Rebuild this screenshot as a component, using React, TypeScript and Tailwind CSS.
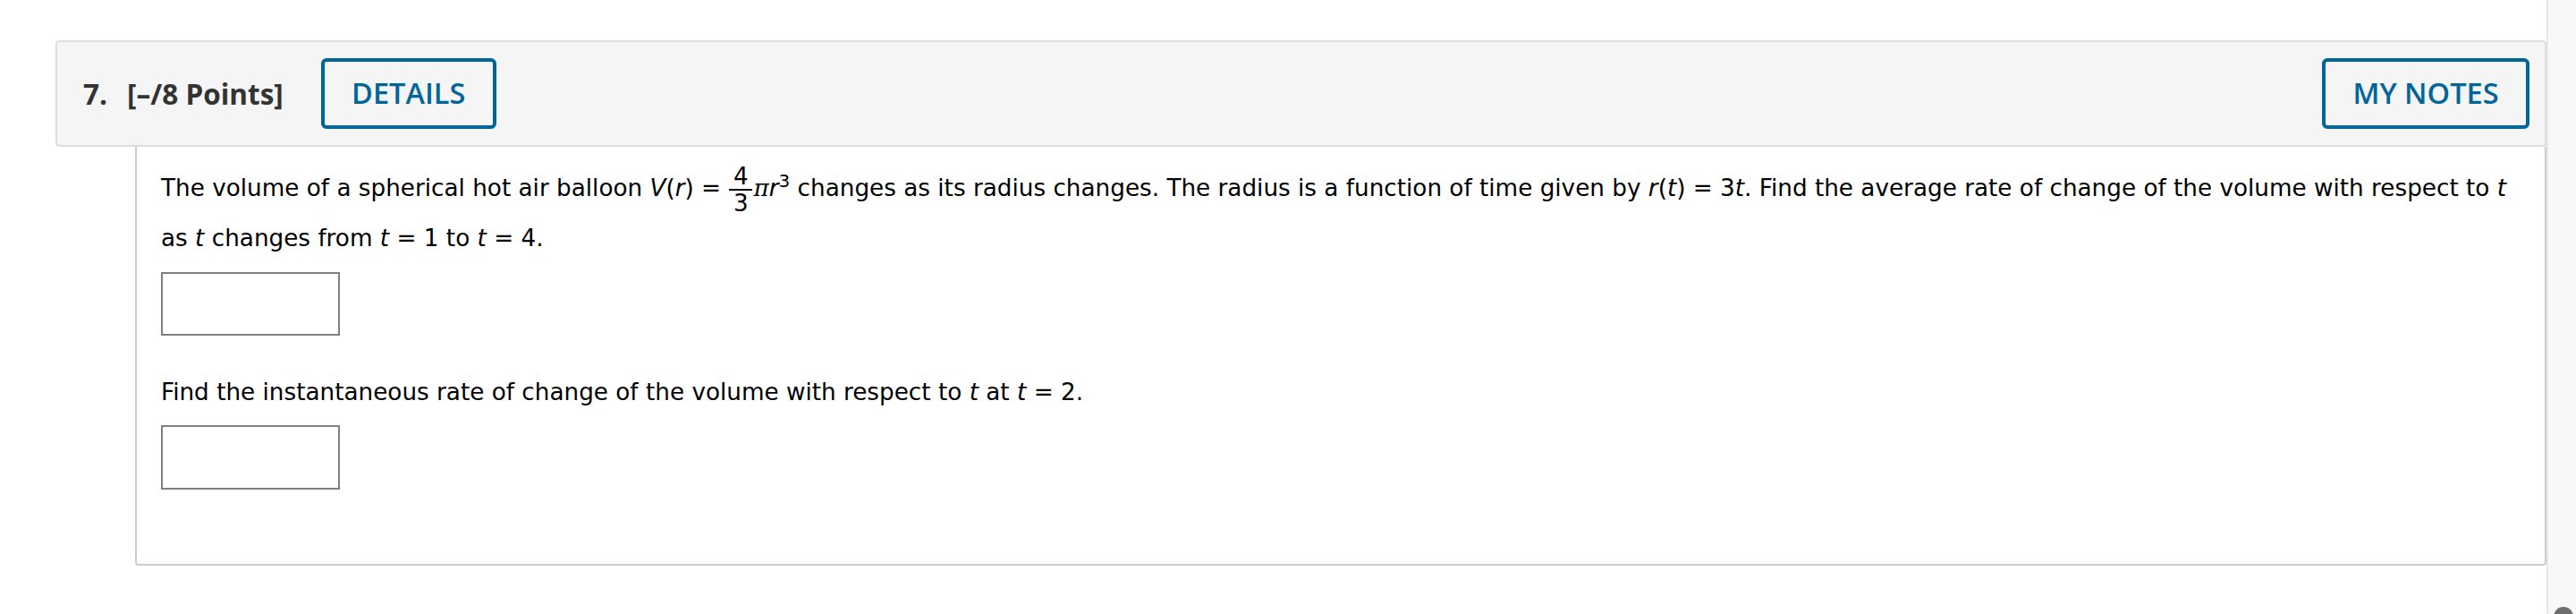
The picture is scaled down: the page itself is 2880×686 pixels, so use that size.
export default function App() {
  return (
    <div className="flex h-[686px] w-full overflow-hidden bg-white">
      <div className="flex-1 pl-[62px] pt-[45px]">
        {/* question header */}
        <div className="flex h-[119px] items-center rounded-[4px] border-2 border-[#dddddd] bg-[#f5f5f5] pl-[29px] pr-[17px] font-['Open_Sans',sans-serif]">
          <span className="text-[31.5px] font-bold text-[#333333]">7.</span>
          <span className="ml-[22px] text-[31.5px] font-bold text-[#333333]">[–/8 Points]</span>
          <button className="ml-[42px] flex h-[79px] w-[196px] items-center justify-center rounded-[6px] border-4 border-[#00669a] text-[32.5px] font-semibold text-[#00669a]">
            DETAILS
          </button>
          <button className="ml-auto flex h-[79px] w-[232px] items-center justify-center rounded-[6px] border-4 border-[#00669a] text-[32.5px] font-semibold text-[#00669a]">
            MY NOTES
          </button>
        </div>

        {/* question body */}
        <div className="ml-[89px] h-[468px] rounded-b-[4px] border-x-2 border-b-2 border-[#cccccc] pl-[27px] pt-[18px] font-['DejaVu_Sans',sans-serif] text-[26.25px] leading-[56px] text-black">
          <p className="whitespace-nowrap">
            The volume of a spherical hot air balloon <i>V</i>(<i>r</i>) ={" "}
            <span className="-my-[8px] inline-flex flex-col items-center px-[1px] align-middle leading-[28px]">
              <span>4</span>
              <span className="h-[2px] w-[26px] bg-black" />
              <span>3</span>
            </span>
            <i className="font-['DejaVu_Serif',serif]">π</i>
            <i>r</i>
            <sup className="text-[20px]">3</sup> changes as its radius changes. The radius is a function of time given by{" "}
            <i>r</i>(<i>t</i>) = 3<i>t</i>. Find the average rate of change of the volume with respect to <i>t</i>
            <br />
            as <i>t</i> changes from <i>t</i> = 1 to <i>t</i> = 4.
          </p>
          <input className="mt-[10px] block h-[71px] w-[200px] border-2 border-[#808080] bg-white" />
          <p className="mt-[35px]">
            Find the instantaneous rate of change of the volume with respect to <i>t</i> at <i>t</i> = 2.
          </p>
          <input className="mt-[9px] block h-[72px] w-[200px] border-2 border-[#808080] bg-white" />
        </div>
      </div>

      {/* scrollbar strip */}
      <div className="relative w-[33px] border-l-2 border-[#e8e8e8] bg-[#f8f8f8]">
        <div className="absolute left-[6px] top-[678px] h-[22px] w-[22px] rounded-full bg-[#6e6e6e]" />
      </div>
    </div>
  );
}
